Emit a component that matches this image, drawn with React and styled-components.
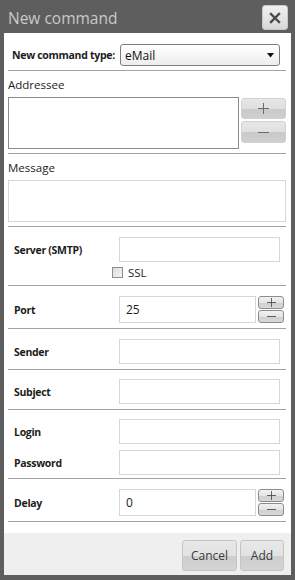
import React from 'react'
import styled, { createGlobalStyle } from 'styled-components'

const Global = createGlobalStyle`
  html, body {
    margin: 0;
    padding: 0;
    background: #5c5c5c;
  }
  * {
    box-sizing: border-box;
  }
`;

const Window = styled.div`
  width: 295px;
  height: 580px;
  background: #5e5e5e;
  padding: 0 4px 5px 4px;
  display: flex;
  flex-direction: column;
  font-family: "Open Sans", "Noto Sans", sans-serif;
  color: #1e1e1e;
`;

const TitleBar = styled.div`
  height: 33px;
  display: flex;
  align-items: flex-start;
  justify-content: space-between;
  padding-left: 4px;
  .title {
    margin-top: 7px;
    font-size: 15.5px;
    color: #c9c9c9;
  }
`;

const CloseButton = styled.div`
  width: 26px;
  height: 25px;
  margin-top: 5px;
  margin-right: 3px;
  background: linear-gradient(#f0f0f0, #d8d8d8);
  border: 1px solid #c8c8c8;
  border-radius: 3px;
  display: flex;
  align-items: center;
  justify-content: center;
`;

const Body = styled.div`
  flex: 1;
  background: #ffffff;
  display: flex;
  flex-direction: column;
`;

const Content = styled.div`
  flex: 1;
  padding: 0 5px 0 4px;
`;

const Section = styled.div`
  padding: ${p => p.pad || '0'};
  border-bottom: 1px solid #a3a3a3;
  display: flex;
  flex-direction: column;
  gap: ${p => p.gap || '0'};
`;

const Row = styled.div`
  display: grid;
  grid-template-columns: ${p => p.col || '105px'} 1fr;
  align-items: center;
  padding-left: ${p => p.indent || '6px'};
`;

const Label = styled.div`
  font-size: 10.5px;
  font-weight: 700;
  color: #1c1c1c;
  white-space: nowrap;
  letter-spacing: -0.3px;
`;

const Caption = styled.div`
  font-size: 11.5px;
  color: #1c1c1c;
  height: ${p => p.h || '26px'};
  display: flex;
  align-items: center;
`;

const Select = styled.div`
  height: 22px;
  width: 160px;
  border: 1px solid #7d7d7d;
  border-radius: 3px;
  background: linear-gradient(#ffffff, #ededed);
  display: flex;
  align-items: center;
  justify-content: space-between;
  padding: 0 5px 0 4px;
  font-size: 12px;
  color: #111;
`;

const TextBox = styled.div`
  height: ${p => p.h || '25px'};
  width: ${p => p.w || '161px'};
  border: 1px solid ${p => (p.dark ? '#8a8a8a' : '#d6d6d6')};
  background: #fff;
  display: flex;
  align-items: center;
  padding-left: 6px;
  font-size: 12px;
  color: #222;
`;

const ListRow = styled.div`
  display: flex;
  gap: 2px;
  padding-bottom: 4px;
`;

const SideButtons = styled.div`
  display: flex;
  flex-direction: column;
  gap: 2px;
  padding-top: 1px;
`;

const GrayButton = styled.div`
  width: 45px;
  height: ${p => p.h || '21px'};
  border: 1px solid #d2d2d2;
  border-radius: 3px;
  background: linear-gradient(#e6e6e6 0%, #e0e0e0 50%, #c9c9c9 51%, #cfcfcf 100%);
  display: flex;
  align-items: center;
  justify-content: center;
`;

const SpinBox = styled.div`
  display: flex;
  align-items: flex-start;
  gap: 2px;
`;

const SpinButtons = styled.div`
  display: flex;
  flex-direction: column;
  gap: 1px;
`;

const SpinButton = styled.div`
  width: 26px;
  height: 13px;
  border: 1px solid #8c8c8c;
  border-radius: 3px;
  background: linear-gradient(#f2f2f2 0%, #e4e4e4 50%, #cfcfcf 51%, #d8d8d8 100%);
  display: flex;
  align-items: center;
  justify-content: center;
`;

const CheckRow = styled.label`
  height: 14px;
  display: flex;
  align-items: center;
  gap: 5px;
  padding-left: 104px;
  font-size: 11.5px;
  color: #1c1c1c;
  .box {
    width: 11px;
    height: 11px;
    border: 1px solid #8e8e8e;
    background: linear-gradient(135deg, #dcdcdc, #f4f4f4);
  }
`;

const Footer = styled.div`
  height: 42px;
  background: #efefef;
  display: flex;
  justify-content: flex-end;
  align-items: flex-start;
  gap: 3px;
  padding: 7px 7px 0 0;
`;

const FooterButton = styled.div`
  width: ${p => p.w};
  height: 31px;
  border: 1px solid #c4c4c4;
  border-radius: 3px;
  background: linear-gradient(#e8e8e8 0%, #e2e2e2 50%, #cdcdcd 51%, #d4d4d4 100%);
  display: flex;
  align-items: center;
  justify-content: center;
  font-size: 12px;
  color: #3a3a3a;
`;

const Plus = ({ size = 11, color = '#6a6a6a' }) => (
  <svg width={size} height={size} viewBox="0 0 11 11">
    <path d="M0 5.5 H11 M5.5 0 V11" stroke={color} strokeWidth="1" />
  </svg>
)

const Minus = ({ size = 11, color = '#6a6a6a' }) => (
  <svg width={size} height={size} viewBox="0 0 11 11">
    <path d="M0 5.5 H11" stroke={color} strokeWidth="1" />
  </svg>
)

const Arrow = () => (
  <svg width="7" height="5" viewBox="0 0 7 5">
    <path d="M0 0 H7 L3.5 4.5 Z" fill="#111" />
  </svg>
)

const Spinner = ({ value }) => (
  <SpinBox>
    <TextBox w="137px" h="27px">{value}</TextBox>
    <SpinButtons>
      <SpinButton><Plus size={9} color="#444" /></SpinButton>
      <SpinButton><Minus size={9} color="#444" /></SpinButton>
    </SpinButtons>
  </SpinBox>
)

export default function App() {
  return (
    <>
      <Global />
      <Window>
        <TitleBar>
          <span className="title">New command</span>
          <CloseButton>
            <svg width="12" height="12" viewBox="0 0 12 12">
              <path d="M2 2 L10 10 M10 2 L2 10" stroke="#4a4a4a" strokeWidth="2.4" strokeLinecap="square" />
            </svg>
          </CloseButton>
        </TitleBar>
        <Body>
          <Content>
            <Section pad="11px 0 4px 0">
              <Row col="108px" indent="4px">
                <Label>New command type:</Label>
                <Select>
                  <span>eMail</span>
                  <Arrow />
                </Select>
              </Row>
            </Section>

            <Section>
              <Caption>Addressee</Caption>
              <ListRow>
                <TextBox dark w="232px" h="52px" />
                <SideButtons>
                  <GrayButton h="21px"><Plus /></GrayButton>
                  <GrayButton h="22px"><Minus /></GrayButton>
                </SideButtons>
              </ListRow>
            </Section>

            <Section pad="0 0 4px 0">
              <Caption h="26px">Message</Caption>
              <TextBox w="100%" h="42px" />
            </Section>

            <Section pad="10px 0 6px 0" gap="3px">
              <Row>
                <Label>Server (SMTP)</Label>
                <TextBox />
              </Row>
              <CheckRow>
                <span className="box" />
                <span>SSL</span>
              </CheckRow>
            </Section>

            <Section pad="10px 0 5px 0">
              <Row>
                <Label>Port</Label>
                <Spinner value="25" />
              </Row>
            </Section>

            <Section pad="10px 0 5px 0">
              <Row>
                <Label>Sender</Label>
                <TextBox />
              </Row>
            </Section>

            <Section pad="9px 0 5px 0">
              <Row>
                <Label>Subject</Label>
                <TextBox />
              </Row>
            </Section>

            <Section pad="9px 0 3px 0" gap="6px">
              <Row>
                <Label>Login</Label>
                <TextBox />
              </Row>
              <Row>
                <Label>Password</Label>
                <TextBox />
              </Row>
            </Section>

            <Section pad="10px 0 5px 0">
              <Row>
                <Label>Delay</Label>
                <Spinner value="0" />
              </Row>
            </Section>
          </Content>
          <Footer>
            <FooterButton w="55px">Cancel</FooterButton>
            <FooterButton w="44px">Add</FooterButton>
          </Footer>
        </Body>
      </Window>
    </>
  )
}
